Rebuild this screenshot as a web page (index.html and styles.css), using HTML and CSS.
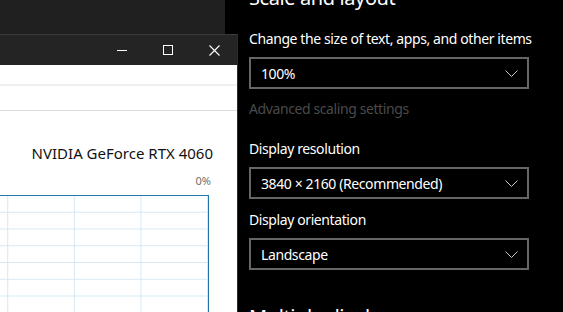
FILE: index.html
```html
<!DOCTYPE html>
<html lang="en">
<head>
    <meta charset="UTF-8">
    <title>Display settings</title>
    <link rel="stylesheet" href="styles.css">
</head>
<body>
    <div class="desktop">
        <div class="left">
            <div class="backdrop"></div>
            <div class="window">
                <div class="titlebar">
                    <div class="caption-btn">
                        <svg width="10" height="10" viewBox="0 0 10 10"><path d="M0 5.5h10" stroke="#fff" stroke-width="1"/></svg>
                    </div>
                    <div class="caption-btn">
                        <svg width="10" height="10" viewBox="0 0 10 10"><rect x="0.5" y="0.5" width="9" height="9" fill="none" stroke="#fff" stroke-width="1"/></svg>
                    </div>
                    <div class="caption-btn">
                        <svg width="11" height="11" viewBox="0 0 11 11"><path d="M0.5 0.5l10 10M10.5 0.5l-10 10" stroke="#fff" stroke-width="1.1"/></svg>
                    </div>
                </div>
                <div class="win-body">
                    <div class="toolbar"></div>
                    <div class="tabs"></div>
                    <div class="gpu-title">NVIDIA GeForce RTX 4060</div>
                    <div class="gpu-pct">0%</div>
                    <div class="graph"></div>
                </div>
            </div>
        </div>

        <div class="settings">
            <h2 class="section first">Scale and layout</h2>

            <div class="label">Change the size of text, apps, and other items</div>
            <div class="dropdown">
                <span>100%</span>
                <svg class="chev" width="13" height="7" viewBox="0 0 13 7"><path d="M0.5 0.5l6 6 6-6" fill="none" stroke="#c8c8c8" stroke-width="1"/></svg>
            </div>

            <div class="link-disabled">Advanced scaling settings</div>

            <div class="label">Display resolution</div>
            <div class="dropdown">
                <span>3840 × 2160 (Recommended)</span>
                <svg class="chev" width="13" height="7" viewBox="0 0 13 7"><path d="M0.5 0.5l6 6 6-6" fill="none" stroke="#c8c8c8" stroke-width="1"/></svg>
            </div>

            <div class="label">Display orientation</div>
            <div class="dropdown">
                <span>Landscape</span>
                <svg class="chev" width="13" height="7" viewBox="0 0 13 7"><path d="M0.5 0.5l6 6 6-6" fill="none" stroke="#c8c8c8" stroke-width="1"/></svg>
            </div>

            <h2 class="section">Multiple displays</h2>
        </div>
    </div>
</body>
</html>
```

FILE: styles.css
```css
html, body {
    margin: 0;
    padding: 0;
    height: 100%;
    overflow: hidden;
}
body {
    background: #000;
    font-family: "Noto Sans", "Open Sans", sans-serif;
    color: #fff;
}
.desktop {
    display: flex;
    height: 312px;
}
.left {
    width: 240px;
    display: flex;
    flex-direction: column;
}
.backdrop {
    width: 225px;
    height: 34px;
    background: #202020;
    flex: none;
}
.window {
    width: 237px;
    flex: 1;
    border-top: 1px solid #3a3a3a;
    border-right: 1px solid #2c2c2c;
    display: flex;
    flex-direction: column;
}
.titlebar {
    height: 30px;
    background: #242424;
    display: flex;
    justify-content: flex-end;
    flex: none;
}
.caption-btn {
    width: 46px;
    display: flex;
    align-items: center;
    justify-content: center;
}
.win-body {
    flex: 1;
    background: #fff;
    color: #000;
    display: flex;
    flex-direction: column;
    align-items: flex-end;
}
.toolbar {
    align-self: stretch;
    height: 19px;
    border-bottom: 2px solid #f0f0f0;
}
.tabs {
    align-self: stretch;
    height: 24px;
    border-bottom: 1px solid #dcdcdc;
}
.gpu-title {
    font-size: 15px;
    line-height: 22px;
    margin-top: 31px;
    margin-right: 24px;
    color: #111;
}
.gpu-pct {
    font-size: 11px;
    line-height: 14px;
    color: #707070;
    margin-top: 10px;
    margin-right: 26px;
}
.graph {
    width: 270px;
    flex: 1;
    margin-top: 7px;
    margin-right: 28px;
    border-top: 1px solid #1f76ac;
    border-right: 1px solid #1f76ac;
    background-image:
        linear-gradient(to left, #d6e8f3 1px, transparent 1px),
        linear-gradient(to top, #d6e8f3 1px, transparent 1px);
    background-size: 66.6px 100%, 100% 16.75px;
    background-position: right 0 top 0, left 0 top 0;
}
.settings {
    flex: 1;
    padding-left: 9px;
    letter-spacing: -0.4px;
}
.section {
    font-size: 20px;
    font-weight: 400;
    line-height: 28px;
    margin: 33px 0 0;
}
.section.first {
    margin-top: -16px;
}
.label {
    font-size: 14px;
    line-height: 20px;
    margin-top: 17px;
}
.dropdown {
    box-sizing: border-box;
    width: 280px;
    height: 32px;
    margin-top: 8px;
    border: 2px solid #666;
    display: flex;
    align-items: center;
    justify-content: space-between;
    padding: 0 9px 0 10px;
    font-size: 14px;
}
.link-disabled {
    font-size: 14px;
    line-height: 20px;
    color: #4a4a4a;
    margin-top: 10px;
}
.link-disabled + .label {
    margin-top: 20px;
}
.dropdown + .label {
    margin-top: 11px;
}
```
